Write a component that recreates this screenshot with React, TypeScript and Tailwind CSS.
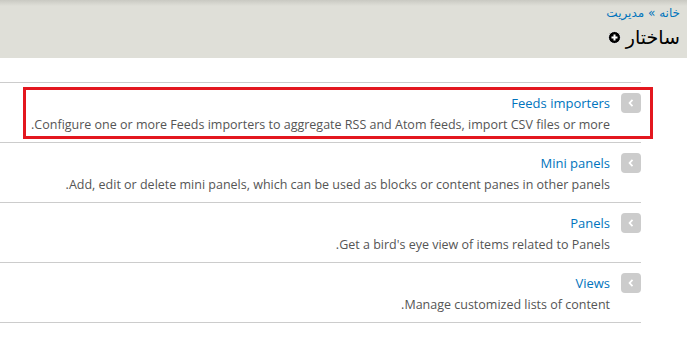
import React from "react";

const rows = [
  {
    title: "Feeds importers",
    desc: "Configure one or more Feeds importers to aggregate RSS and Atom feeds, import CSV files or more.",
    marked: true,
  },
  {
    title: "Mini panels",
    desc: "Add, edit or delete mini panels, which can be used as blocks or content panes in other panels.",
  },
  { title: "Panels", desc: "Get a bird's eye view of items related to Panels." },
  { title: "Views", desc: "Manage customized lists of content." },
];

function Chevron() {
  return (
    <span className="flex h-[20px] w-[20px] shrink-0 items-center justify-center rounded-[4px] bg-[#cccccc]">
      <svg width="6" height="8" viewBox="0 0 6 8">
        <path d="M4.5 0.8 L1.6 4 L4.5 7.2" fill="none" stroke="#fff" strokeWidth="1.8" />
      </svg>
    </span>
  );
}

function AddIcon() {
  return (
    <svg width="13" height="13" viewBox="0 0 13 13" className="shrink-0">
      <circle cx="6.5" cy="6.5" r="6" fill="#000" stroke="#fff" strokeWidth="0.8" />
      <path d="M6.5 3.5 V9.5 M3.5 6.5 H9.5" stroke="#fff" strokeWidth="2" />
    </svg>
  );
}

export default function App() {
  return (
    <div
      dir="rtl"
      className="h-[341px] w-[687px] overflow-hidden bg-white font-['Open_Sans','DejaVu_Sans',sans-serif]"
    >
      <div className="h-[58px] bg-[linear-gradient(to_bottom,#c9c9c2,#dfdfd8_6px)] pr-[7px] pt-[5px]">
        <div className="text-[12px] leading-[16px] text-[#0074bd] font-['DejaVu_Sans',sans-serif]">
          خانه » مدیریت
        </div>
        <div className="mt-[4px] flex items-center gap-[5px]">
          <h1 className="text-[19px] leading-[24px] text-black font-['DejaVu_Sans',sans-serif]">ساختار</h1>
          <AddIcon />
        </div>
      </div>

      <div className="mr-auto mt-[24px] w-[641px] border-t border-[#cccccc]">
        {rows.map((r) => (
          <div key={r.title} className="relative flex h-[60px] items-start gap-[11px] border-b border-[#cccccc] pt-[10px]">
            <Chevron />
            <div>
              <div className="text-[13px] leading-[20px] text-[#0074bd]">{r.title}</div>
              <div className="mt-[2px] text-[12.5px] leading-[20px] text-[#555555]">{r.desc}</div>
            </div>
            {r.marked && (
              <div className="pointer-events-none absolute left-[23px] top-[4px] h-[52px] w-[630px] border-[3px] border-[#e3171f]" />
            )}
          </div>
        ))}
      </div>
    </div>
  );
}
